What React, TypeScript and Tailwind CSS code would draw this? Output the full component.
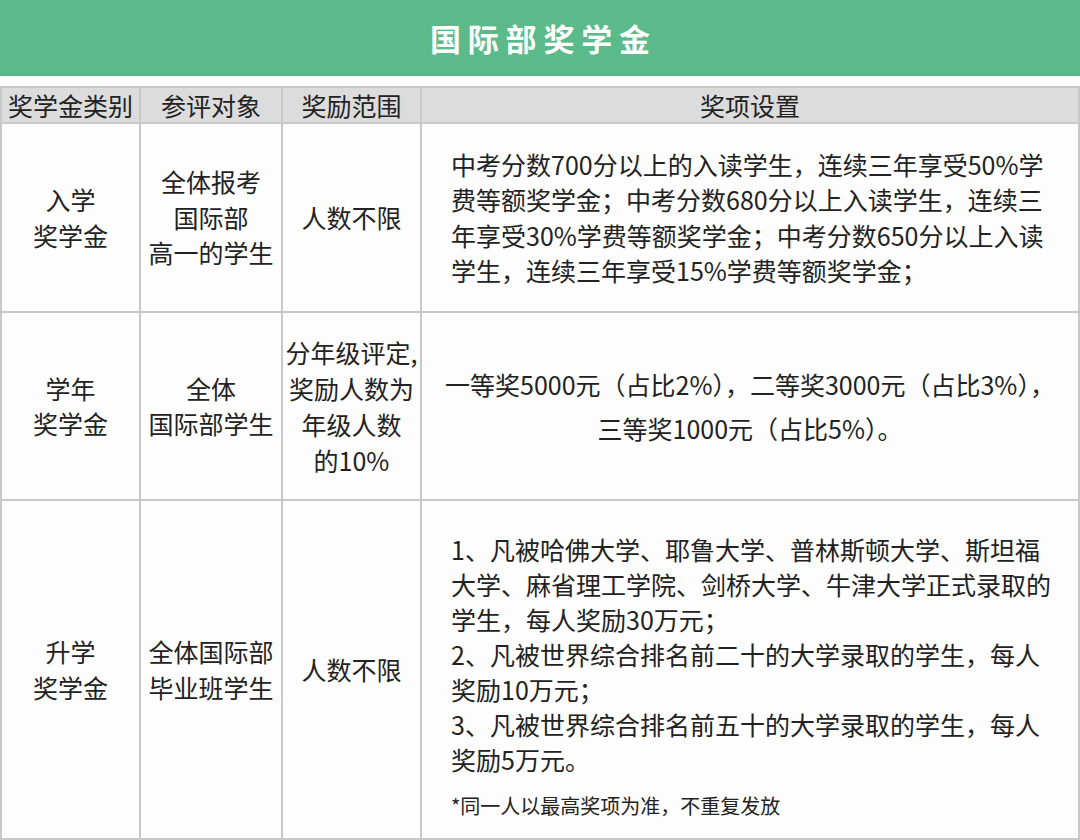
import React from "react";

const font = { fontFamily: '"Noto Sans CJK SC", "Noto Sans", sans-serif' };

function Cell({ children, last = false, className = "" }: { children: React.ReactNode; last?: boolean; className?: string }) {
  return (
    <div className={`flex flex-col items-center justify-center text-center text-[25px] leading-[35.5px] text-[#222] ${last ? "" : "border-r-2 border-[#c8c8c8]"} ${className}`}>
      {children}
    </div>
  );
}

export default function App() {
  return (
    <div className="w-[1080px] h-[840px] bg-[#fdfdfd] overflow-hidden" style={font}>
      <div className="h-[76px] bg-[#5bba8a] flex items-center justify-center">
        <span className="text-white font-bold text-[31px] tracking-[0.22em] pl-[0.22em]">国际部奖学金</span>
      </div>
      <div className="mt-[10px] h-[754px] border-2 border-[#c8c8c8] flex flex-col">
        {/* header */}
        <div className="h-[36px] grid grid-cols-[139px_142px_139px_1fr] bg-[#dcdcdc] border-b-2 border-[#c8c8c8]">
          <Cell className="text-[22px] leading-[34px]">奖学金类别</Cell>
          <Cell className="text-[22px] leading-[34px]">参评对象</Cell>
          <Cell className="text-[22px] leading-[34px]">奖励范围</Cell>
          <Cell last className="text-[22px] leading-[34px]">奖项设置</Cell>
        </div>
        {/* row 1 */}
        <div className="h-[189px] grid grid-cols-[139px_142px_139px_1fr] border-b-2 border-[#c8c8c8]">
          <Cell>
            <div>入学</div>
            <div>奖学金</div>
          </Cell>
          <Cell>
            <div>全体报考</div>
            <div>国际部</div>
            <div>高一的学生</div>
          </Cell>
          <Cell>
            <div>人数不限</div>
          </Cell>
          <Cell last className="items-start text-left pl-[29px]">
            <div className="whitespace-nowrap">中考分数700分以上的入读学生，连续三年享受50%学</div>
            <div className="whitespace-nowrap">费等额奖学金；中考分数680分以上入读学生，连续三</div>
            <div className="whitespace-nowrap">年享受30%学费等额奖学金；中考分数650分以上入读</div>
            <div className="whitespace-nowrap">学生，连续三年享受15%学费等额奖学金；</div>
          </Cell>
        </div>
        {/* row 2 */}
        <div className="h-[188px] grid grid-cols-[139px_142px_139px_1fr] border-b-2 border-[#c8c8c8]">
          <Cell>
            <div>学年</div>
            <div>奖学金</div>
          </Cell>
          <Cell>
            <div>全体</div>
            <div>国际部学生</div>
          </Cell>
          <Cell className="leading-[36px]">
            <div className="whitespace-nowrap">分年级评定,</div>
            <div className="whitespace-nowrap">奖励人数为</div>
            <div>年级人数</div>
            <div>的10%</div>
          </Cell>
          <Cell last className="leading-[44px]">
            <div className="whitespace-nowrap">一等奖5000元（占比2%），二等奖3000元（占比3%），</div>
            <div className="whitespace-nowrap">三等奖1000元（占比5%）。</div>
          </Cell>
        </div>
        {/* row 3 */}
        <div className="flex-1 grid grid-cols-[139px_142px_139px_1fr]">
          <Cell>
            <div>升学</div>
            <div>奖学金</div>
          </Cell>
          <Cell>
            <div className="whitespace-nowrap">全体国际部</div>
            <div className="whitespace-nowrap">毕业班学生</div>
          </Cell>
          <Cell>
            <div>人数不限</div>
          </Cell>
          <Cell last className="items-start justify-start text-left pl-[29px] pt-[31px] leading-[35px]">
            <div className="whitespace-nowrap">1、凡被哈佛大学、耶鲁大学、普林斯顿大学、斯坦福</div>
            <div className="whitespace-nowrap">大学、麻省理工学院、剑桥大学、牛津大学正式录取的</div>
            <div className="whitespace-nowrap">学生，每人奖励30万元；</div>
            <div className="whitespace-nowrap">2、凡被世界综合排名前二十的大学录取的学生，每人</div>
            <div className="whitespace-nowrap">奖励10万元；</div>
            <div className="whitespace-nowrap">3、凡被世界综合排名前五十的大学录取的学生，每人</div>
            <div className="whitespace-nowrap">奖励5万元。</div>
            <div className="whitespace-nowrap text-[20px] leading-[26px] mt-[16px]">*同一人以最高奖项为准，不重复发放</div>
          </Cell>
        </div>
      </div>
    </div>
  );
}
